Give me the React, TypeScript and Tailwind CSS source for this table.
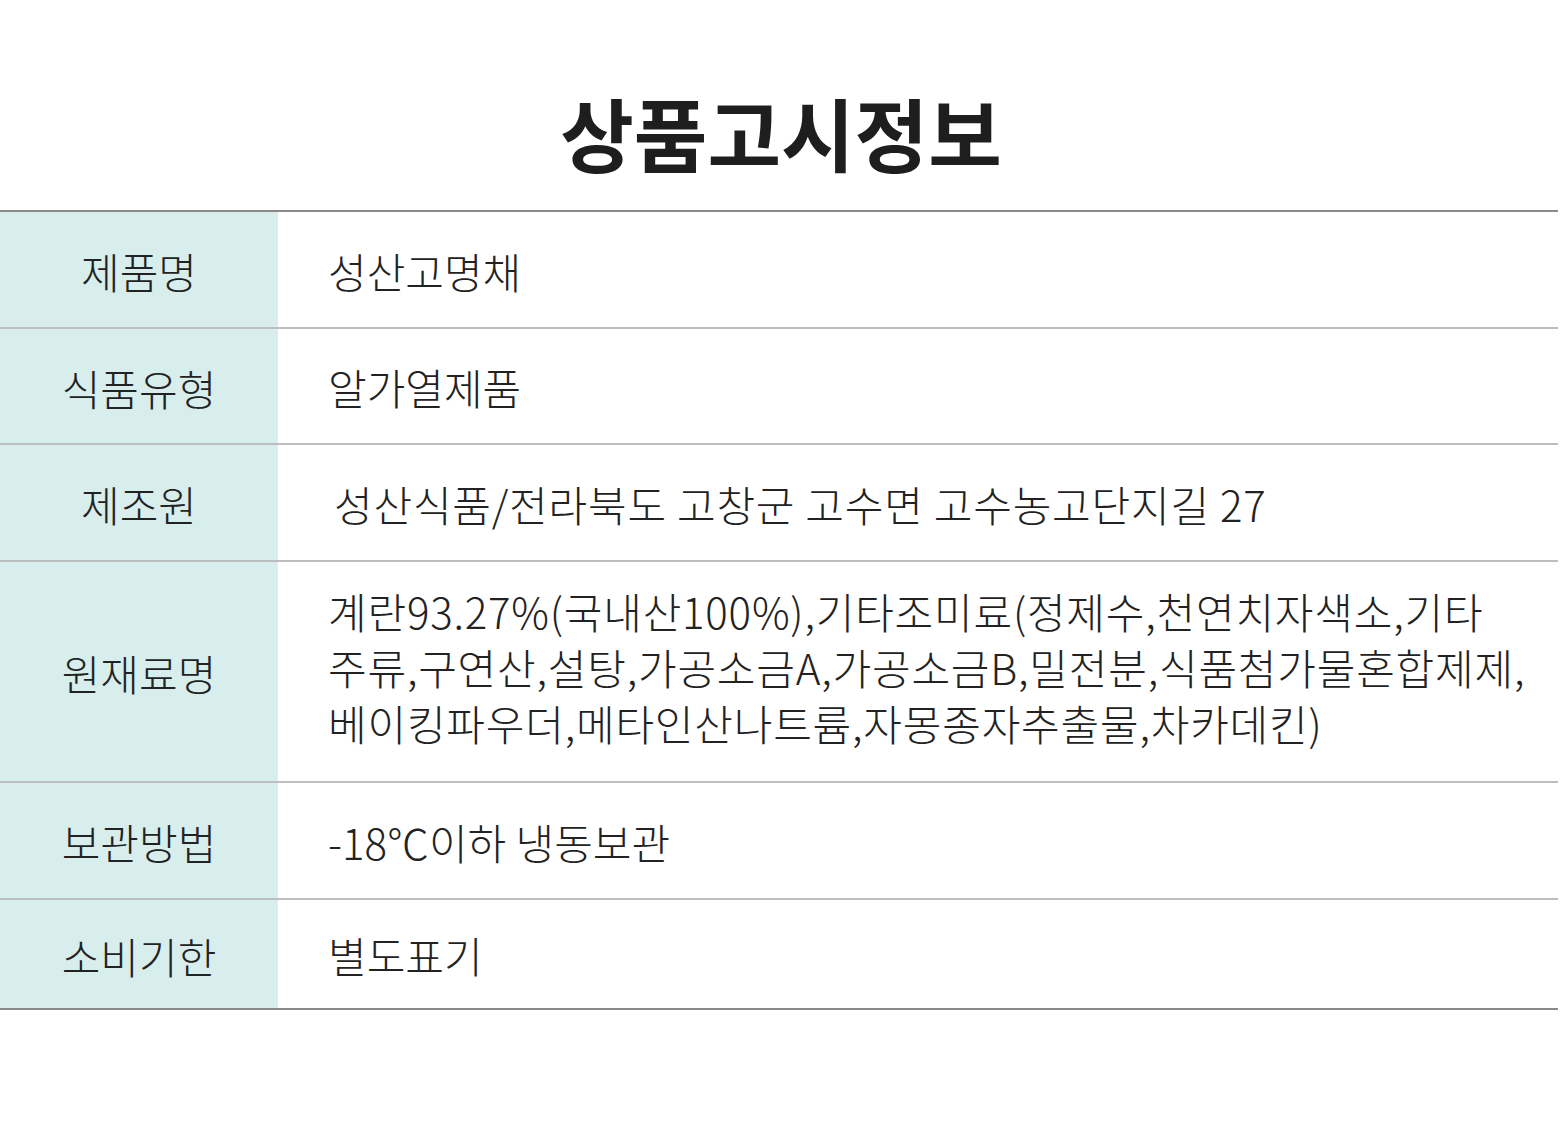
const rows: { label: string; lines: string[]; h: string; pl?: string; extra?: string }[] = [
  { label: "제품명", lines: ["성산고명채"], h: "h-[117px]" },
  { label: "식품유형", lines: ["알가열제품"], h: "h-[116px]" },
  {
    label: "제조원",
    lines: ["성산식품/전라북도 고창군 고수면 고수농고단지길 27"],
    h: "h-[117px]",
    pl: "pl-[56px]",
    extra: "tracking-[0.8px]",
  },
  {
    label: "원재료명",
    lines: [
      "계란93.27%(국내산100%),기타조미료(정제수,천연치자색소,기타",
      "주류,구연산,설탕,가공소금A,가공소금B,밀전분,식품첨가물혼합제제,",
      "베이킹파우더,메타인산나트륨,자몽종자추출물,차카데킨)",
    ],
    h: "h-[221px]",
    extra: "tracking-[0.8px] pb-[12px]",
  },
  { label: "보관방법", lines: ["-18℃이하 냉동보관"], h: "h-[117px]" },
  { label: "소비기한", lines: ["별도표기"], h: "h-[110px]" },
];

export default function App() {
  return (
    <div
      className="w-[1562px] h-[1127px] bg-white text-[#222]"
      style={{ fontFamily: '"Noto Sans CJK KR", "Noto Sans", sans-serif' }}
    >
      <div className="h-[210px] flex items-center justify-center pt-[52px]">
        <h1 className="text-[80px] font-bold text-[#1e1e1e]">상품고시정보</h1>
      </div>
      <div className="w-[1558px] border-t-2 border-[#8a8a8a]">
        {rows.map((r, i) => (
          <div
            key={r.label}
            className={`flex ${r.h} border-b-2 ${i === rows.length - 1 ? "border-[#8a8a8a]" : "border-[#bdbdbd]"}`}
          >
            <div className="w-[278px] shrink-0 bg-[#d7eeed] flex items-center justify-center text-[42px] font-light pt-[2px]">
              {r.label}
            </div>
            <div className={`flex-1 flex items-center ${r.pl ?? "pl-[50px]"}`}>
              <p className={`text-[42px] font-light leading-[56px] whitespace-nowrap pt-[2px] ${r.extra ?? ""}`}>
                {r.lines.map((l, j) => (
                  <span key={j} className="block">
                    {l}
                  </span>
                ))}
              </p>
            </div>
          </div>
        ))}
      </div>
    </div>
  );
}
